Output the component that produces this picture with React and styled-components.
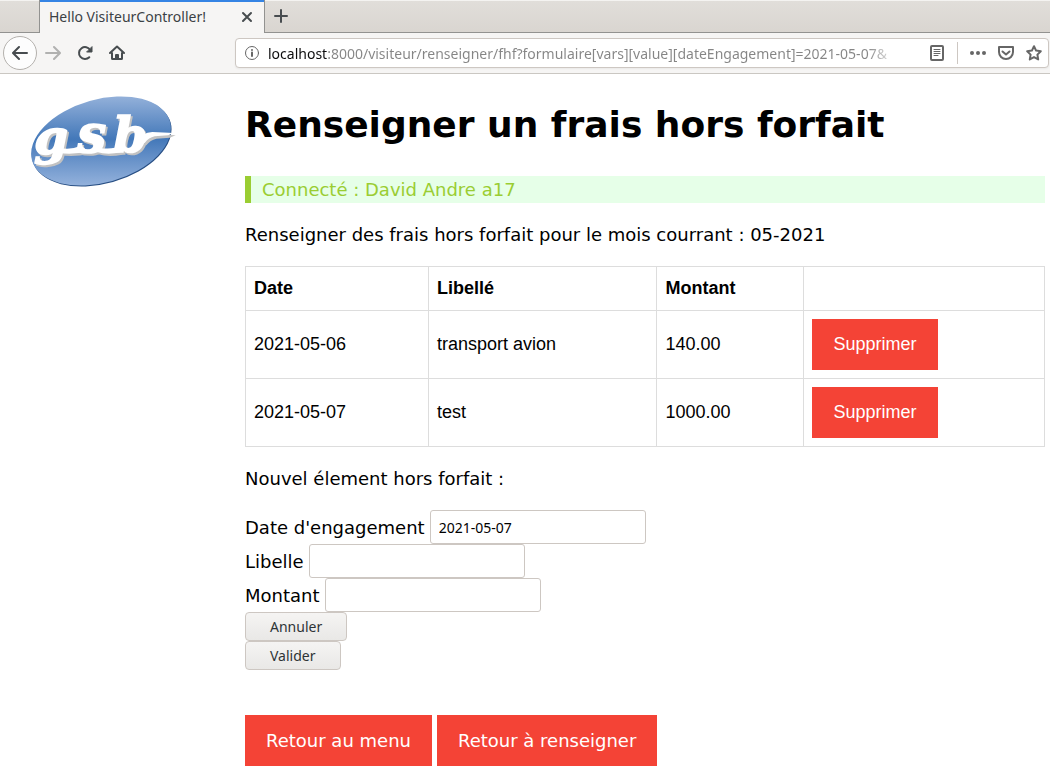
import React from "react";
import styled, { createGlobalStyle } from "styled-components";

const uiFont = `"Noto Sans", "Open Sans", sans-serif`;

const GlobalStyle = createGlobalStyle`
  * { box-sizing: border-box; }
  body {
    margin: 0;
    background: #fff;
    color: #000;
    font: 18px/27px "DejaVu Sans", Verdana, sans-serif;
  }
`;

const TabStrip = styled.div`
  display: flex;
  height: 33px;
  background: linear-gradient(#e1deda, #d9d5d0);
  box-shadow: inset 0 1px #f4f3f1, inset 0 -1px #929290;
  padding-left: 39px;
`;

const Tab = styled.div`
  display: flex;
  align-items: center;
  justify-content: space-between;
  width: 226px;
  padding: 0 9px;
  background: #f6f5f4;
  border: solid #929290;
  border-width: 0 1px;
  box-shadow: inset 0 2px #3584e4;
  font: 14px/20px ${uiFont};
  color: #3b4145;
`;

const IconButton = styled.button`
  display: flex;
  align-items: center;
  justify-content: center;
  flex: none;
  width: ${(p) => p.$size || 32}px;
  height: ${(p) => p.$size || 32}px;
  padding: 0;
  border: ${(p) => (p.$round ? "1px solid #b4b1ad" : "0")};
  border-radius: 50%;
  background: ${(p) => (p.$round ? "#fdfdfd" : "transparent")};
  color: ${(p) => p.$tone || "#474c4f"};
`;

const Toolbar = styled.nav`
  display: flex;
  align-items: center;
  height: 41px;
  padding: 0 1px 0 3px;
  background: #f6f5f4;
  border-bottom: 1px solid #cac7c2;
`;

const NavButtons = styled.div`
  display: flex;
  align-items: center;
  width: 232px;
  flex: none;
`;

const AddressBar = styled.div`
  display: flex;
  align-items: center;
  flex: 1;
  min-width: 0;
  height: 30px;
  padding-left: 8px;
  border: 1px solid #cdc7c2;
  border-radius: 4px;
  background: #fff;
  box-shadow: 0 1px 2px #0000000d;
  color: #666;
`;

const AddressInput = styled.input`
  flex: 1;
  min-width: 0;
  height: 28px;
  margin: 0 24px 0 8px;
  padding: 0;
  border: 0;
  outline: 0;
  font: 14px/20px ${uiFont};
  color: transparent;
  background: linear-gradient(90deg, #0c0c0d 60px, #858585 60px, #858585 calc(100% - 32px), #85858500);
  -webkit-background-clip: text;
  background-clip: text;
`;

const Divider = styled.span`
  width: 1px;
  height: 22px;
  margin: 0 6px;
  background: #cdc7c2;
`;

const Page = styled.div`
  display: grid;
  grid-template-columns: 225px minmax(0, 1fr);
  padding: 0 5px 18px 20px;
`;

const Sidebar = styled.aside`
  padding-top: 11px;
  svg { display: block; }
`;

const Title = styled.h1`
  margin: 24px 0;
  font-size: 36px;
  line-height: 54px;
`;

const Notice = styled.div`
  padding-left: 11px;
  border-left: 6px solid #9acd32;
  background: #e6ffe8;
  color: #9acd32;
`;

const Text = styled.p`
  margin: 18px 0;
`;

const Table = styled.table`
  width: 100%;
  table-layout: fixed;
  border-collapse: collapse;
  font-family: "Liberation Sans", Arial, sans-serif;
`;

const Col = styled.col`
  width: ${(p) => p.$width};
`;

const Head = styled.th`
  padding: 8px;
  border: 1px solid #ddd;
  text-align: left;
`;

const Cell = styled.td`
  padding: 8px;
  border: 1px solid #ddd;
`;

const RedLink = styled.a`
  display: block;
  width: fit-content;
  padding: 12px 21px;
  background: #f44336;
  color: #fff;
  text-decoration: none;
`;

const Form = styled.form`
  display: flex;
  flex-direction: column;
  align-items: flex-start;
`;

const Field = styled.div`
  display: flex;
  align-items: center;
  gap: 5px;
`;

const TextBox = styled.input`
  width: 216px;
  height: 34px;
  padding: 0 8px;
  border: 1px solid #cdc7c2;
  border-radius: 3px;
  background: #fff;
  color: #000;
  font: 14px/20px ${uiFont};
`;

const FormButton = styled.button`
  height: 29px;
  padding: 0 24px;
  border: 1px solid #cdc7c2;
  border-radius: 4px;
  background: linear-gradient(#f5f4f3, #e9e8e6);
  color: #2e3436;
  font: 14px/20px ${uiFont};
`;

const Links = styled.div`
  display: flex;
  gap: 5px;
  margin-top: 45px;
`;

const Glyph = ({ size = 16, children, width = 2 }) => (
  <svg width={size} height={size} viewBox="0 0 16 16" fill="none" stroke="currentColor"
    strokeWidth={width} strokeLinecap="round" strokeLinejoin="round" aria-hidden="true">
    {children}
  </svg>
);

const Logo = () => (
  <svg width="170" height="110" viewBox="0 0 510 330" role="img" aria-label="gsb">
    <defs>
      <linearGradient id="oval" gradientUnits="userSpaceOnUse" x1="243" y1="33" x2="243" y2="303"
        gradientTransform="rotate(15.8 243 168)">
        <stop offset="0" stopColor="#94b1da" />
        <stop offset="0.48" stopColor="#4378b9" />
        <stop offset="0.62" stopColor="#5a88c3" />
        <stop offset="1" stopColor="#94b2dc" />
      </linearGradient>
      <g id="mark">
        <g fontFamily="DejaVu Serif, serif" fontStyle="italic" fontWeight="bold" strokeWidth="5">
          <text x="42" y="207" fontSize="146">g</text>
          <text x="172" y="200" fontSize="154">s</text>
          <text x="280" y="201" fontSize="146">b</text>
        </g>
        <path stroke="none" d="M118 188 Q150 196 183 182 L205 199 Q153 211 116 203Z M238 188 Q278 196 304 179 L302 202 Q262 211 230 201Z M350 170 Q366 143 397 141 L462 144 L444 151 L404 154 Q386 158 374 174Z" />
      </g>
    </defs>
    <ellipse cx="245" cy="171" rx="215" ry="125" transform="rotate(-15.8 245 171)" fill="#274e83" />
    <ellipse cx="243" cy="168" rx="215" ry="125" transform="rotate(-15.8 243 168)" fill="url(#oval)" />
    <use href="#mark" x="5" y="7" fill="#c2c2c2" stroke="#c2c2c2" />
    <use href="#mark" fill="#fff" stroke="#fff" />
  </svg>
);

const rows = [
  { date: "2021-05-06", label: "transport avion", amount: "140.00" },
  { date: "2021-05-07", label: "test", amount: "1000.00" },
];

const fields = [
  { id: "date", label: "Date d'engagement", value: "2021-05-07" },
  { id: "libelle", label: "Libelle", value: "" },
  { id: "montant", label: "Montant", value: "" },
];

export default function App() {
  return (
    <>
      <GlobalStyle />
      <header>
        <TabStrip>
          <Tab>
            Hello VisiteurController!
            <IconButton $size={16} aria-label="Fermer l'onglet">
              <Glyph><path d="M4 4l8 8M12 4l-8 8" /></Glyph>
            </IconButton>
          </Tab>
          <IconButton aria-label="Nouvel onglet">
            <Glyph><path d="M8 2v12M2 8h12" /></Glyph>
          </IconButton>
        </TabStrip>
        <Toolbar>
          <NavButtons>
            <IconButton $size={34} $round aria-label="Précédent">
              <Glyph><path d="M15 8H1.5M7 2L1 8l6 6" /></Glyph>
            </IconButton>
            <IconButton $tone="#b1b1b0" aria-label="Suivant">
              <Glyph><path d="M1 8h13.500M9 2l6 6-6 6" /></Glyph>
            </IconButton>
            <IconButton aria-label="Actualiser">
              <Glyph>
                <path d="M12.300 12.300A6 6 0 1 1 13.200 5" />
                <path d="M15 2v5h-5z" fill="currentColor" strokeWidth="1" />
              </Glyph>
            </IconButton>
            <IconButton aria-label="Accueil">
              <Glyph>
                <path d="M1 8l7-6.500L15 8M3 8v5.500q0 .5.5.5h9q.5 0 .5-.5V8" />
                <path d="M7 13v-3h2v3" />
              </Glyph>
            </IconButton>
          </NavButtons>
          <AddressBar>
            <Glyph width={1}>
              <circle cx="8" cy="8" r="6.500" />
              <path d="M8 7.500v3.500M8 5v.1" strokeWidth="2" />
            </Glyph>
            <AddressInput
              aria-label="Adresse"
              defaultValue="localhost:8000/visiteur/renseigner/fhf?formulaire[vars][value][dateEngagement]=2021-05-07&"
            />
            <IconButton $size={28} $tone="#666" aria-label="Mode lecture">
              <Glyph>
                <rect x="2" y="1" width="12" height="14" rx="1" />
                <path d="M5 4.500h6M5 6.500h6M5 8.500h6M5 10.500h4" strokeWidth="1" />
              </Glyph>
            </IconButton>
            <Divider />
            <IconButton $size={28} $tone="#666" aria-label="Actions">
              <Glyph>
                <g fill="currentColor" stroke="none">
                  <circle cx="2" cy="8" r="2" /><circle cx="8" cy="8" r="2" /><circle cx="14" cy="8" r="2" />
                </g>
              </Glyph>
            </IconButton>
            <IconButton $size={28} $tone="#666" aria-label="Pocket">
              <Glyph>
                <path d="M1 2h14v5a7 7 0 0 1-14 0zM4.500 6.500L8 9.500l3.500-3" />
              </Glyph>
            </IconButton>
            <IconButton $size={28} $tone="#666" aria-label="Marque-page">
              <Glyph>
                <path d="M8 1.200l2.100 4.400 4.700.6-3.400 3.400.8 4.800L8 12.100l-4.200 2.300.8-4.800L1.200 6.200l4.700-.6z" />
              </Glyph>
            </IconButton>
          </AddressBar>
        </Toolbar>
      </header>
      <Page>
        <Sidebar><Logo /></Sidebar>
        <main>
          <Title>Renseigner un frais hors forfait</Title>
          <Notice>Connecté : David Andre a17</Notice>
          <Text>Renseigner des frais hors forfait pour le mois courrant : 05-2021</Text>
          <Table>
            <colgroup>
              <Col $width="22.9%" /><Col $width="28.6%" /><Col $width="18.4%" /><Col $width="30.1%" />
            </colgroup>
            <thead>
              <tr><Head>Date</Head><Head>Libellé</Head><Head>Montant</Head><Head /></tr>
            </thead>
            <tbody>
              {rows.map((r) => (
                <tr key={r.date}>
                  <Cell>{r.date}</Cell>
                  <Cell>{r.label}</Cell>
                  <Cell>{r.amount}</Cell>
                  <Cell><RedLink href="#">Supprimer</RedLink></Cell>
                </tr>
              ))}
            </tbody>
          </Table>
          <Text>Nouvel élement hors forfait :</Text>
          <Form>
            {fields.map((f) => (
              <Field key={f.id}>
                <label htmlFor={f.id}>{f.label}</label>
                <TextBox id={f.id} type="text" defaultValue={f.value} />
              </Field>
            ))}
            <FormButton type="reset">Annuler</FormButton>
            <FormButton type="button">Valider</FormButton>
          </Form>
          <Links>
            <RedLink href="#">Retour au menu</RedLink>
            <RedLink href="#">Retour à renseigner</RedLink>
          </Links>
        </main>
      </Page>
    </>
  );
}
